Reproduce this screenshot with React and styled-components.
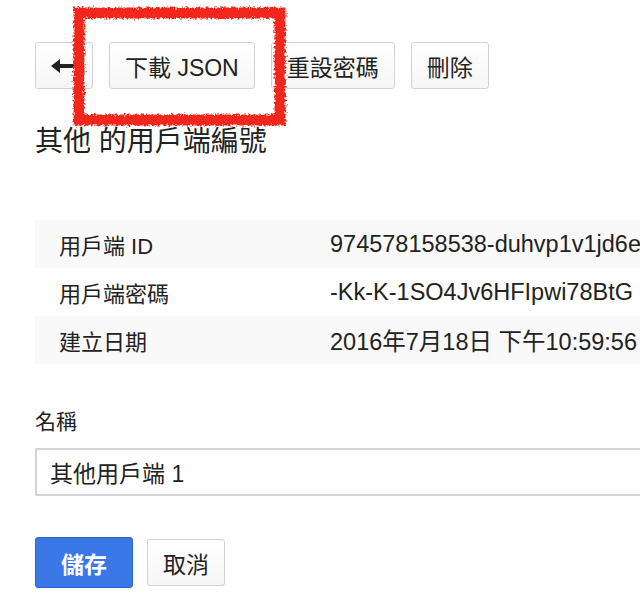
import React from "react";
import styled, { createGlobalStyle } from "styled-components";

const GlobalStyle = createGlobalStyle`
  html, body {
    margin: 0;
    padding: 0;
    background: #fff;
    overflow: hidden;
  }
  body {
    font-family: "Liberation Sans", "Noto Sans CJK TC", sans-serif;
    color: #222;
  }
`;

const details = [
    {label: "用戶端 ID", value: "974578158538-duhvp1v1jd6ekl3sbn2h8s0q1c4bu6gh.apps.googleusercontent.com"},
    {label: "用戶端密碼", value: "-Kk-K-1SO4Jv6HFIpwi78BtG"},
    {label: "建立日期", value: "2016年7月18日 下午10:59:56"},
];

const BackArrow = () => (
    <svg width="26" height="16" viewBox="0 0 26 16">
        <path d="M0 8 L9 1 L9 6 L26 6 L26 10 L9 10 L9 15 Z" fill="#222"/>
    </svg>
);

const Highlight = () => (
    <Scribble width="640" height="140" viewBox="0 0 640 140">
        <defs>
            <filter id="rough" x="-10%" y="-10%" width="120%" height="120%">
                <feTurbulence type="fractalNoise" baseFrequency="0.45" numOctaves="2" seed="4"/>
                <feDisplacementMap in="SourceGraphic" scale="6"/>
            </filter>
        </defs>
        <rect x="79" y="13" width="201" height="107" fill="none"
              stroke="#f1281c" strokeWidth="11" filter="url(#rough)"/>
    </Scribble>
);

const App = () => {
    return <Page>
        <GlobalStyle/>
        <Highlight/>
        <Toolbar>
            <Button><BackArrow/></Button>
            <Button>下載 JSON</Button>
            <Button>重設密碼</Button>
            <Button>刪除</Button>
        </Toolbar>
        <Title>其他 的用戶端編號</Title>
        <DetailTable>
            {details.map((row, i) =>
                <DetailRow key={row.label} shaded={i % 2 === 0}>
                    <DetailLabel>{row.label}</DetailLabel>
                    <DetailValue>{row.value}</DetailValue>
                </DetailRow>
            )}
        </DetailTable>
        <Field>
            <FieldLabel>名稱</FieldLabel>
            <TextInput defaultValue="其他用戶端 1"/>
        </Field>
        <Actions>
            <Button primary>儲存</Button>
            <Button>取消</Button>
        </Actions>
    </Page>
}

const Page = styled.div`
  position: relative;
  padding: 42px 0 0 35px;
  width: 900px;
`;

const Scribble = styled.svg`
  position: absolute;
  left: 0;
  top: 0;
  pointer-events: none;
  z-index: 2;
`;

const Toolbar = styled.div`
  display: flex;
  gap: 16px;
`;

const Button = styled.button`
  display: flex;
  align-items: center;
  justify-content: center;
  height: ${p => p.primary ? 51 : 47}px;
  padding: 0 ${p => p.primary ? 25 : 15}px;
  font-family: "Liberation Sans", "Noto Sans CJK TC", sans-serif;
  font-size: 23px;
  font-weight: ${p => p.primary ? 700 : 400};
  color: ${p => p.primary ? "#fff" : "#222"};
  background: ${p => p.primary ? "#3b78e7" : "linear-gradient(#fff, #f6f6f6)"};
  border: ${p => p.primary ? "1px solid #2c65cf" : "1.5px solid #d2d2d2"};
  border-radius: 3px;
  cursor: pointer;
`;

const Title = styled.h1`
  margin: 34px 0 0;
  font-size: 28px;
  font-weight: 400;
  line-height: 38px;
`;

const DetailTable = styled.div`
  margin-top: 59px;
`;

const DetailRow = styled.div`
  display: grid;
  grid-template-columns: 295px 1fr;
  align-items: center;
  height: 48px;
  background: ${p => p.shaded ? "#f9f9f9" : "#fff"};
`;

const DetailLabel = styled.div`
  padding-left: 24px;
  font-size: 22px;
`;

const DetailValue = styled.div`
  font-size: 23.5px;
  white-space: nowrap;
`;

const Field = styled.div`
  margin-top: 44px;
`;

const FieldLabel = styled.div`
  font-size: 21px;
  line-height: 28px;
  margin-bottom: 12px;
`;

const TextInput = styled.input`
  box-sizing: border-box;
  width: 700px;
  height: 48px;
  padding: 0 13px;
  font-family: "Liberation Sans", "Noto Sans CJK TC", sans-serif;
  font-size: 23px;
  color: #222;
  border: 2px solid #d4d4d4;
  border-radius: 1px;
  outline: none;
`;

const Actions = styled.div`
  display: flex;
  align-items: center;
  gap: 14px;
  margin-top: 41px;
`;

export default App
